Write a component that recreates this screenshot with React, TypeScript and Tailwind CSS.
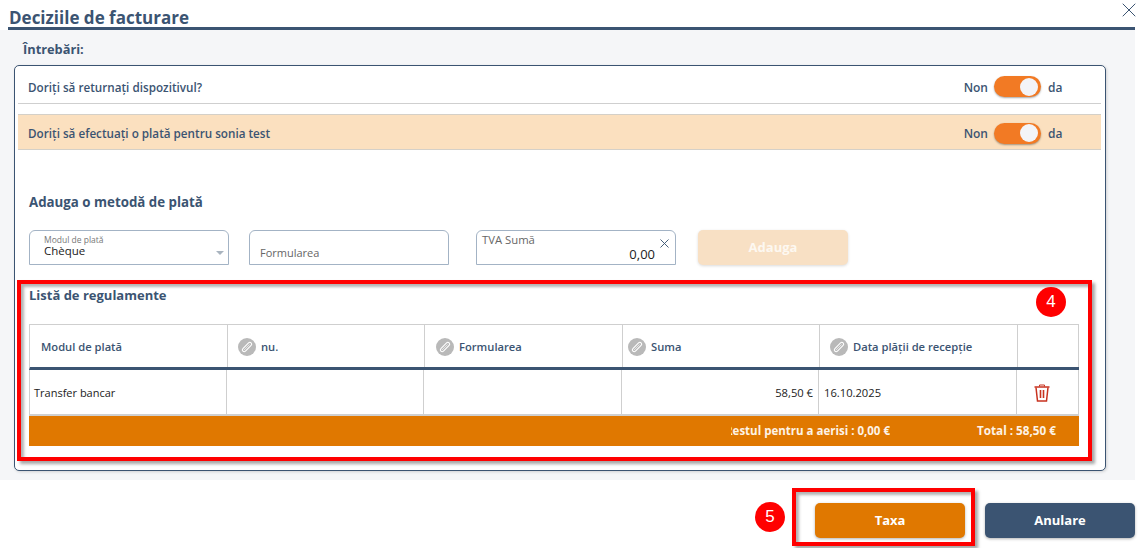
import { X } from "lucide-react";

const font = "font-['Open_Sans','Noto_Sans',sans-serif]";

function Toggle() {
  return (
    <div className="flex items-center text-[12px] font-semibold text-[#3b5472]">
      <span className="pt-[2px]">Non</span>
      <div className="mr-[7px] ml-[6px] flex h-[21px] w-[47px] items-center justify-end rounded-full bg-[#f27a24] pr-[3px] shadow-[0_1px_2px_rgba(0,0,0,0.35)]">
        <div className="h-[18px] w-[18px] rounded-full bg-[#f3f4f8]" />
      </div>
      <span className="w-[53px] pt-[2px]">da</span>
    </div>
  );
}

function PencilBadge() {
  return (
    <span className="mr-[5px] flex h-[18px] w-[18px] items-center justify-center rounded-full bg-[#b9b9b9]">
      <svg width="18" height="18" viewBox="0 0 18 18" fill="none" stroke="#ffffff" strokeWidth="1.1">
        <rect x="7.2" y="3.2" width="3.6" height="11.6" rx="1.8" transform="rotate(45 9 9)" />
        <path d="M6 12 L11.5 6.5" strokeWidth="0.6" />
      </svg>
    </span>
  );
}

function TrashIcon() {
  return (
    <svg width="16" height="18" viewBox="0 0 16 18" fill="none" stroke="#c8321f">
      <path d="M5.5 2.5 V1 H10.5 V2.5" strokeWidth="1" />
      <path d="M0.5 3 H15.5" strokeWidth="1.5" />
      <path d="M2 3.5 L3.5 17 H12.5 L14 3.5" strokeWidth="1.5" />
      <path d="M6.5 6 V14 M9.5 6 V14" strokeWidth="1.6" />
    </svg>
  );
}

function HeadCell({ label, edit, className }: { label?: string; edit?: boolean; className: string }) {
  return (
    <div className={`flex items-center border-r border-[#cfcfcf] pt-[2px] text-[11.2px] font-semibold text-[#3b5472] ${className}`}>
      {edit && <PencilBadge />}
      {label}
    </div>
  );
}

export default function App() {
  return (
    <div className={`relative h-[548px] w-[1141px] overflow-hidden bg-white ${font}`}>
      <header className="relative mx-[8px] flex h-[30px] w-[1127px] items-end border-b-[3px] border-[#3b5472]">
        <h1 className="pl-[1px] text-[17px] leading-[18px] font-bold text-[#3b5472]">Deciziile de facturare</h1>
        <X size={24} strokeWidth={1} color="#3b5472" className="absolute -top-[2px] -right-[6px]" />
      </header>

      <section className="h-[450px] w-[1135px] bg-[#f5f6f8] pl-[14px]">
        <div className="flex h-[35px] items-center pt-[4px] pl-[9px] text-[12.8px] font-bold text-[#3b5472]">Întrebări:</div>

        <div className="h-[406px] w-[1092px] rounded-[5px] border border-[#3b5472] bg-white pr-[4px] pl-[3px] shadow-[1px_1px_3px_rgba(0,0,0,0.15)]">
          <div className="flex h-[38px] items-center justify-between border-b border-[#cfcfcf] pt-[4px] pl-[10px] text-[11.7px] font-semibold text-[#3b5472]">
            <span className="pt-[2px]">Doriți să returnați dispozitivul?</span>
            <Toggle />
          </div>
          <div className="mt-[10px] flex h-[36px] items-center justify-between border-y border-[#d4d0c8] bg-[#fbe0bf] pt-[2px] pl-[10px] text-[11.7px] font-semibold text-[#3b5472]">
            <span className="pt-[2px]">Doriți să efectuați o plată pentru sonia test</span>
            <Toggle />
          </div>

          <h2 className="mt-[42px] pl-[11px] text-[13.3px] leading-[20px] font-bold text-[#3b5472]">Adauga o metodă de plată</h2>

          <div className="mt-[18px] flex pl-[11px]">
            <div className="relative h-[35px] w-[200px] rounded-t-[6px] border border-[#a3b3c5] pl-[14px]">
              <div className="pt-[4px] text-[8.5px] leading-[10px] text-[#777777]">Modul de plată</div>
              <div className="text-[11.5px] leading-[12px] text-[#222222]">Chèque</div>
              <span className="absolute top-[20px] right-[4px] h-0 w-0 border-x-[4px] border-t-[4px] border-x-transparent border-t-[#a9b4bf]" />
            </div>
            <div className="ml-[20px] flex h-[35px] w-[200px] items-end rounded-t-[6px] border border-[#a3b3c5] pb-[3px] pl-[10px] text-[11px] text-[#666666]">
              Formularea
            </div>
            <div className="relative ml-[27px] h-[35px] w-[200px] rounded-t-[6px] border border-[#a3b3c5]">
              <div className="pt-[1px] pl-[5px] text-[11.3px] leading-[15px] text-[#666666]">TVA Sumă</div>
              <div className="pr-[20px] text-right text-[13px] leading-[15px] text-[#222222]">0,00</div>
              <X size={15} strokeWidth={1.5} color="#3b5472" className="absolute top-[5px] right-[3px]" />
            </div>
            <div className="ml-[22px] flex h-[35px] w-[150px] items-center justify-center rounded-[5px] bg-[#f8e0c4] text-[13px] font-bold text-[#fdf8f1] shadow-[0_1px_3px_rgba(0,0,0,0.15)]">
              Adauga
            </div>
          </div>

          <h2 className="mt-[20px] pl-[11px] text-[13px] leading-[20px] font-bold text-[#3b5472]">Listă de regulamente</h2>

          <div className="mt-[19px] ml-[11px] w-[1050px]">
            <div className="flex h-[46px] border-t border-b-[3px] border-l border-[#cfcfcf] border-b-[#3b5472]">
              <HeadCell label="Modul de plată" className="w-[198px] pl-[11px]" />
              <HeadCell label="nu." edit className="w-[197px] pl-[10px]" />
              <HeadCell label="Formularea" edit className="w-[198px] pl-[11px]" />
              <HeadCell label="Suma" edit className="w-[197px] pl-[5px]" />
              <HeadCell label="Data plății de recepție" edit className="w-[198px] pl-[10px]" />
              <HeadCell className="flex-1" />
            </div>
            <div className="flex h-[46px] border-b-[2px] border-l border-b-[#d0d0d0] border-l-[#cfcfcf] pt-0 text-[11.2px] text-[#222222]">
              <div className="flex w-[197px] items-center border-r border-[#cfcfcf] pt-[2px] pl-[4px] text-[11px]">Transfer bancar</div>
              <div className="w-[197px] border-r border-[#cfcfcf]" />
              <div className="w-[198px] border-r border-[#cfcfcf]" />
              <div className="flex w-[197px] items-center justify-end border-r border-[#cfcfcf] pt-[2px] pr-[5px]">58,50 €</div>
              <div className="flex w-[198px] items-center border-r border-[#cfcfcf] pt-[2px] pl-[5px]">16.10.2025</div>
              <div className="flex flex-1 items-center justify-center border-r border-[#cfcfcf] pt-[2px] pr-[12px]">
                <TrashIcon />
              </div>
            </div>
            <div className="flex h-[30px] w-[1050px] items-center bg-[#e07800] text-[11.5px] font-bold text-[#fdf3e6]">
              {/* the first letter is cut off in the original */}
              <div className="ml-[702px] flex w-[159px] justify-end overflow-hidden whitespace-nowrap">Restul pentru a aerisi : 0,00 €</div>
              <div className="ml-[87px] text-[11.7px]">Total : 58,50 €</div>
            </div>
          </div>
        </div>
      </section>

      <footer className="flex justify-end pt-[23px] pr-[6px]">
        <button className="h-[35px] w-[150px] rounded-[5px] bg-[#e07800] text-[13px] font-bold text-white shadow-[0_1px_3px_rgba(0,0,0,0.3)]">Taxa</button>
        <button className="ml-[20px] h-[35px] w-[150px] rounded-[5px] bg-[#3b5472] text-[13px] font-bold text-white shadow-[0_1px_3px_rgba(0,0,0,0.3)]">Anulare</button>
      </footer>

      {/* annotation overlays */}
      <div className="absolute top-[280px] left-[17px] h-[181px] w-[1075px] border-[4px] border-[#ff0000] shadow-[3px_3px_3px_rgba(0,0,0,0.35),inset_3px_3px_3px_rgba(0,0,0,0.3)]" />
      <div className="absolute top-[488px] left-[792px] h-[58px] w-[183px] border-[4px] border-[#ff0000] shadow-[3px_3px_3px_rgba(0,0,0,0.35),inset_3px_3px_3px_rgba(0,0,0,0.3)]" />
      <div className="absolute top-[287px] left-[1036px] flex h-[30px] w-[30px] items-center justify-center rounded-full bg-[#ff0000] font-['Liberation_Sans',sans-serif] text-[17px] text-white">4</div>
      <div className="absolute top-[502px] left-[755px] flex h-[30px] w-[30px] items-center justify-center rounded-full bg-[#ff0000] font-['Liberation_Sans',sans-serif] text-[17px] text-white">5</div>
    </div>
  );
}
